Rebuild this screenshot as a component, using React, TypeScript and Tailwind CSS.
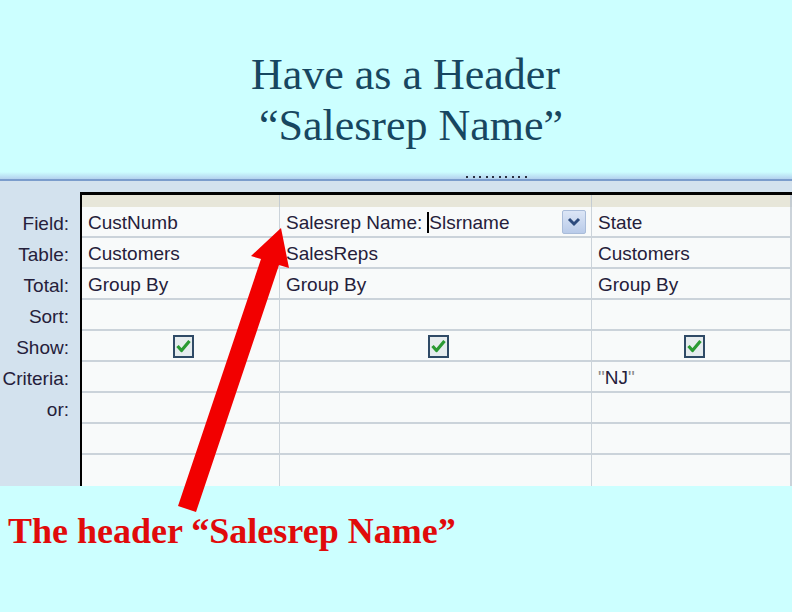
import React from "react";

const labels = ["Field:", "Table:", "Total:", "Sort:", "Show:", "Criteria:", "or:", "", ""];

function Check() {
  return (
    <div className="w-[21px] h-[23px] border-2 border-[#2f4a66] bg-[#e6ecee] flex items-center justify-center">
      <svg width="15" height="14" viewBox="0 0 15 14">
        <path d="M1.5 7 L5.5 11.5 L13.5 2" fill="none" stroke="#2a9a32" strokeWidth="3.2" strokeLinejoin="round" />
      </svg>
    </div>
  );
}

type Cell = React.ReactNode;

const rows: Cell[][] = [
  [
    "CustNumb",
    <div className="flex items-center w-full pr-[5px]">
      <span>Salesrep Name: </span>
      <span className="inline-block w-[2px] h-[21px] bg-black ml-[5px]" />
      <span>Slsrname</span>
      <div className="ml-auto w-[24px] h-[24px] rounded-[2px] border border-[#a9bcd9] bg-gradient-to-b from-[#dce6f6] to-[#b9cbe9] flex items-center justify-center">
        <svg width="14" height="10" viewBox="0 0 14 10">
          <path d="M2 2 L7 7 L12 2" fill="none" stroke="#2d4b7d" strokeWidth="3" />
        </svg>
      </div>
    </div>,
    "State",
  ],
  ["Customers", "SalesReps", "Customers"],
  ["Group By", "Group By", "Group By"],
  ["", "", ""],
  [
    <div className="w-full flex justify-center"><Check /></div>,
    <div className="w-full flex justify-center"><Check /></div>,
    <div className="w-full flex justify-center"><Check /></div>,
  ],
  ["", "", <span><span className="text-[#8a8a8a]">"</span>NJ<span className="text-[#8a8a8a]">"</span></span>],
  ["", "", ""],
  ["", "", ""],
  ["", "", ""],
];

export default function App() {
  return (
    <div className="relative w-[792px] h-[612px] overflow-hidden bg-[#ccffff]">
      {/* Title */}
      <div
        className="h-[172px] pt-[49px] pl-[19px] text-center text-[44px] leading-[51px] text-[#174660]"
        style={{ fontFamily: '"Liberation Serif", "Times New Roman", serif' }}
      >
        <div>Have as a Header</div>
        <div>{"\u00a0“Salesrep Name”"}</div>
      </div>

      {/* strip */}
      <div className="h-[7px] bg-gradient-to-b from-[#ccffff] to-[#b4d2ee] flex items-end pl-[466px] gap-[4.5px] pb-[1px]">
        {Array.from({ length: 10 }).map((_, i) => (
          <div key={i} className="w-[2px] h-[2px] bg-[#2a3040]" />
        ))}
      </div>
      <div className="h-[2px] bg-[#7b9dcc]" />

      {/* panel */}
      <div
        className="bg-[#d3e2ee] pt-[11px] flex text-[19px] leading-none text-[#25203a]"
        style={{ fontFamily: '"Liberation Sans", Arial, sans-serif' }}
      >
        <div className="w-[80px] pt-[15px] flex flex-col">
          {labels.map((l, i) => (
            <div key={i} className="h-[31px] flex items-center justify-end pr-[11px] pt-[1px]">
              {l}
            </div>
          ))}
        </div>
        <div className="flex-1 border-t-[3px] border-l-2 border-black bg-[#f8fafa]">
          <div className="h-[12px] bg-[#e7e6d9] grid grid-cols-[198px_312px_1fr]">
            <div className="border-r border-[#c4ccd2]" />
            <div className="border-r border-[#c4ccd2]" />
            <div className="border-r-2 border-[#c4ccd2]" />
          </div>
          {rows.map((r, i) => (
            <div key={i} className="grid grid-cols-[198px_312px_1fr]">
              {r.map((c, j) => (
                <div
                  key={j}
                  className={`h-[31px] flex items-center pl-[6px] pt-[1px] ${i < 8 ? "border-b-2" : ""} ${
                    j < 2 ? "border-r" : "border-r-2"
                  } border-[#cbd3da]`}
                >
                  {c}
                </div>
              ))}
            </div>
          ))}
        </div>
      </div>

      {/* bottom text */}
      <div
        className="pt-[27px] pl-[8px] text-[36px] leading-[36px] font-bold text-[#e00b0b]"
        style={{ fontFamily: '"Liberation Serif", "Times New Roman", serif' }}
      >
        The header “Salesrep Name”
      </div>

      {/* red arrow overlay */}
      <svg className="absolute left-0 top-0 pointer-events-none" width="792" height="612">
        <polygon
          points="281,228 289,268 279,265 196,512 178,506 261,259 251,256"
          fill="#f20000"
        />
      </svg>
    </div>
  );
}
